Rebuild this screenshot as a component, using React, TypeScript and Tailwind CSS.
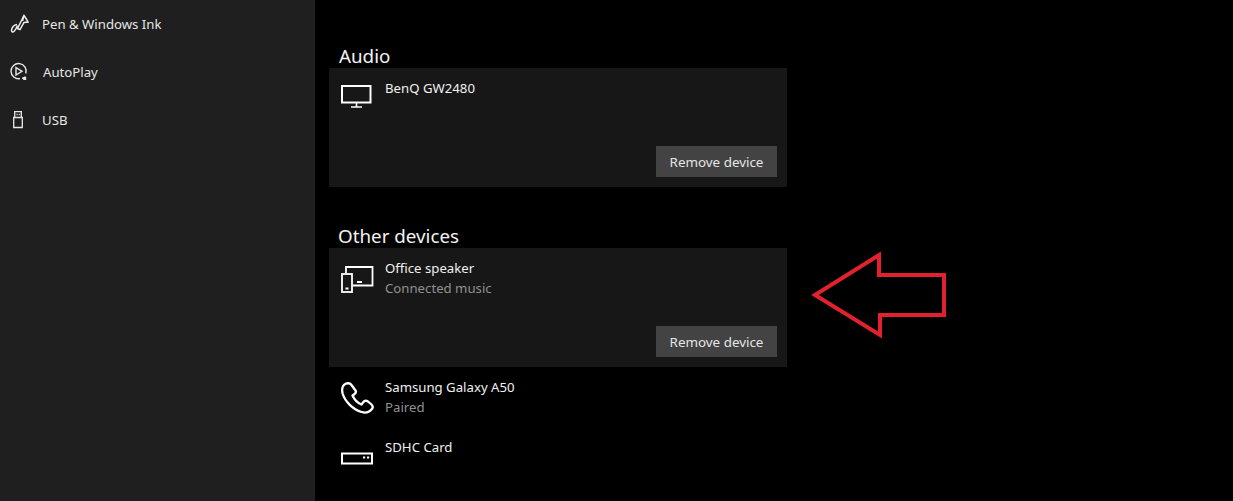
import React from "react";

function Monitor() {
  return (
    <svg width="32" height="23" viewBox="0 0 32 23" fill="none" stroke="#fff" strokeWidth="2" className="block">
      <rect x="1" y="1" width="28.5" height="16.5" />
      <path d="M15.5 18v3.5M10 22h11" strokeWidth="1.6" />
    </svg>
  );
}
function Devices() {
  return (
    <svg width="33" height="27" viewBox="0 0 33 27" fill="none" stroke="#fff" strokeWidth="2" className="block">
      <path d="M5 7V1h26.5v18.5H12" strokeWidth="1.8" />
      <rect x="1" y="8" width="10" height="18" strokeWidth="1.8" />
      <path d="M4.5 22.5h3M16 16h5" strokeWidth="2" />
    </svg>
  );
}
function Phone() {
  return (
    <svg width="33" height="32" viewBox="0 0 33 32" fill="none" stroke="#fff" strokeWidth="2.3" strokeLinejoin="round" className="block">
      <path d="M3 2.8 C5.5 0.6 9 0.8 10.5 3 L14.5 8.5 C15.5 10 14.5 11.5 13 12.5 L11.5 13.5 C13 17 17 21 20.5 22.5 L22 20.5 C23.5 18.5 25.5 18.5 27 19.5 L30.5 22.5 C32 24 32 26 30.5 27.5 C28 30.5 24 31 20.5 30 C12 27.5 4 19.5 1.6 11.5 C0.8 8 0.8 4.8 3 2.8 Z" />
    </svg>
  );
}
function Card() {
  return (
    <svg width="32" height="13" viewBox="0 0 32 13" fill="none" stroke="#fff" strokeWidth="2" className="block">
      <rect x="1" y="1.5" width="30" height="10" />
      <path d="M22 5.5h2.2M26 5.5h2.2" />
    </svg>
  );
}
function Pen() {
  return (
    <svg width="20" height="20" viewBox="0 0 20 20" fill="none" stroke="#efefef" strokeWidth="1.5" className="block">
      <path d="M15 1.5 C16.5 3.5 18 6 19 8 L15 8.5 L11 15.5 L8.5 14.5 L12 7.5 Z" />
      <path d="M14.8 2 L13.5 7" />
      <path d="M8 10.5 C5 10.8 2.5 13.5 2.5 16.5 C2.5 18 4 18.5 5 17.5 C6.5 16 7.5 14 8.5 11.5" />
    </svg>
  );
}
function AutoPlay() {
  return (
    <svg width="20" height="20" viewBox="0 0 20 20" fill="none" stroke="#e8e8e8" strokeWidth="1.4" className="block">
      <path d="M11 16.6 A7.6 7.6 0 1 1 16.8 11.5" />
      <path d="M7 5.5 L13 9.3 L7 13 Z" />
      <path d="M13 16.2 C14.5 16.5 15.8 15.8 16.3 14.5" />
      <rect x="14.2" y="15" width="3" height="3" fill="#e8e8e8" stroke="none" />
    </svg>
  );
}
function Usb() {
  return (
    <svg width="20" height="20" viewBox="0 0 20 20" fill="none" stroke="#e8e8e8" strokeWidth="1.3" className="block">
      <path d="M4.7 7.5 H13.3 V17.5 H4.7 Z" />
      <path d="M5.7 7.5 V1.7 H12.3 V7.5" />
      <path d="M7.5 4.5 H8.6 M9.7 4.5 H10.8" />
    </svg>
  );
}

function NavItem({ icon, label, ml }: { icon: React.ReactNode; label: string; ml: string }) {
  return (
    <div className="flex h-12 items-center pl-[9px]">
      <span className="flex w-5 justify-center">{icon}</span>
      <span className={`${ml} pt-[2px] text-[13.2px] text-[#e6e6e6]`}>{label}</span>
    </div>
  );
}

function RemoveButton() {
  return (
    <div className="flex justify-end pr-[10px]">
      <button className="h-[31px] w-[121px] bg-[#434343] pt-[2px] text-[13.4px] text-[#e6e6e6]">Remove device</button>
    </div>
  );
}

function Row({ icon, name, sub, iconTop }: { icon: React.ReactNode; name: string; sub?: string; iconTop: string }) {
  return (
    <div className="flex h-[60px] pl-[12px] pt-[10px]">
      <span className={`${iconTop} w-[32px] shrink-0`}>{icon}</span>
      <div className="ml-[12px] flex flex-col">
        <span className="h-5 text-[13.2px] leading-[20px] text-[#f0f0f0]">{name}</span>
        {sub && <span className="h-5 text-[13.2px] leading-[20px] text-[#919191]">{sub}</span>}
      </div>
    </div>
  );
}

export default function App() {
  return (
    <div className="relative flex h-[501px] w-[1233px] overflow-hidden bg-black font-['Noto_Sans',sans-serif]">
      <aside className="h-full w-[315px] shrink-0 bg-[#1f1f1f]">
        <NavItem icon={<Pen />} label="Pen & Windows Ink" ml="ml-[13px]" />
        <NavItem icon={<AutoPlay />} label="AutoPlay" ml="ml-[14px]" />
        <NavItem icon={<Usb />} label="USB" ml="ml-[13px]" />
      </aside>
      <main className="ml-[14px] w-[458px] pt-[42px]">
        <h2 className="h-[26px] pl-[10px] text-[18.8px] leading-[28px] text-[#f2f2f2]">Audio</h2>
        <section className="h-[119px] bg-[#171717]">
          <Row icon={<Monitor />} name="BenQ GW2480" iconTop="mt-[7px]" />
          <div className="h-[18px]" />
          <RemoveButton />
        </section>
        <h2 className="mt-[35px] h-[26px] pl-[9px] text-[18.8px] leading-[28px] text-[#f2f2f2]">Other devices</h2>
        <section className="h-[119px] bg-[#171717]">
          <Row icon={<Devices />} name="Office speaker" sub="Connected music" iconTop="mt-[8px]" />
          <div className="h-[18px]" />
          <RemoveButton />
        </section>
        <Row icon={<Phone />} name="Samsung Galaxy A50" sub="Paired" iconTop="mt-[5px]" />
        <Row icon={<Card />} name="SDHC Card" iconTop="mt-[15px]" />
      </main>
      <svg className="absolute left-[805px] top-[245px]" width="150" height="100" viewBox="805 245 150 100" fill="none" stroke="#e1222c" strokeWidth="4" strokeLinejoin="miter">
        <path d="M815 295 L879 255 L879 275 L944 275 L944 315 L880 315 L880 335 Z" />
      </svg>
    </div>
  );
}
